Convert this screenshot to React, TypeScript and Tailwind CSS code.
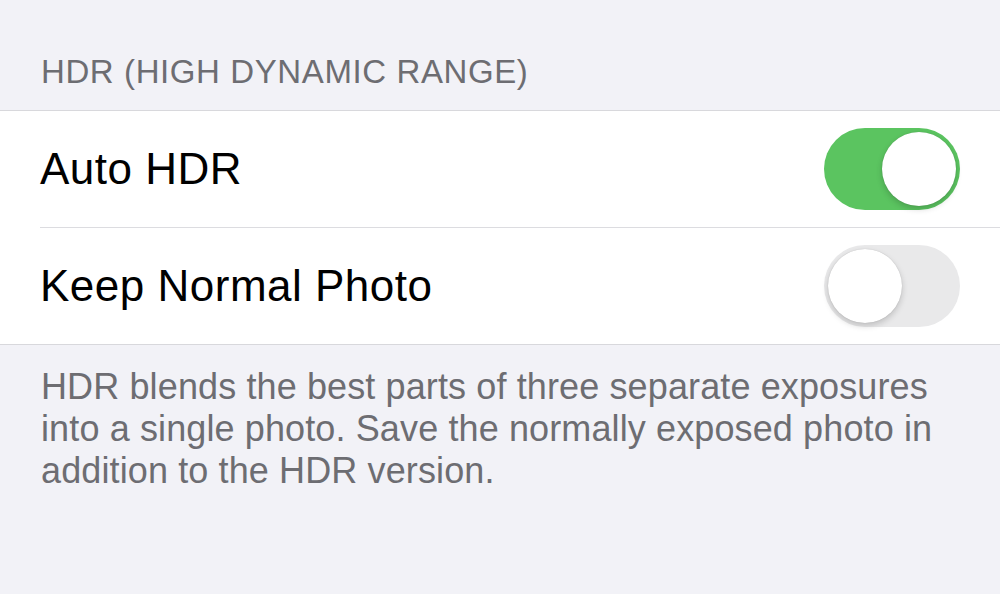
import React, { useState } from "react";

type ToggleProps = {
  on: boolean;
  onChange: (v: boolean) => void;
};

function Toggle({ on, onChange }: ToggleProps) {
  return (
    <button
      onClick={() => onChange(!on)}
      className={`relative flex h-[82px] w-[136px] shrink-0 items-center rounded-full p-[4px] ${
        on ? "justify-end bg-[#5bc460]" : "justify-start bg-[#e9e9ea]"
      }`}
    >
      <span className="block h-[74px] w-[74px] rounded-full bg-white shadow-[0_3px_6px_rgba(0,0,0,0.18),0_0_1px_rgba(0,0,0,0.2)]" />
    </button>
  );
}

export default function App() {
  const [autoHdr, setAutoHdr] = useState(true);
  const [keepNormal, setKeepNormal] = useState(false);

  return (
    <div
      className="h-[594px] w-full overflow-hidden bg-[#f2f2f7]"
      style={{ fontFamily: '"Liberation Sans", Arial, sans-serif' }}
    >
      <div className="px-[41px] pb-[22px] pt-[55px] text-[33px] leading-none tracking-[0.6px] text-[#6d6d72]">
        HDR (HIGH DYNAMIC RANGE)
      </div>

      <div className="border-y border-[#d8d8dc] bg-white">
        <div className="flex h-[116px] items-center pl-[40px] pr-[40px]">
          <span className="flex-1 text-[44px] leading-none tracking-[0.5px] text-black">Auto HDR</span>
          <Toggle on={autoHdr} onChange={setAutoHdr} />
        </div>
        <div className="ml-[40px] border-t border-[#dcdce0]" />
        <div className="flex h-[116px] items-center pl-[40px] pr-[40px]">
          <span className="flex-1 text-[44px] leading-none tracking-[0.5px] text-black">Keep Normal Photo</span>
          <Toggle on={keepNormal} onChange={setKeepNormal} />
        </div>
      </div>

      <p className="px-[41px] pt-[21px] text-[36px] leading-[42px] tracking-[0.12px] text-[#6d6d72]">
        HDR blends the best parts of three separate exposures
        <br />
        into a single photo. Save the normally exposed photo in
        <br />
        addition to the HDR version.
      </p>
    </div>
  );
}
